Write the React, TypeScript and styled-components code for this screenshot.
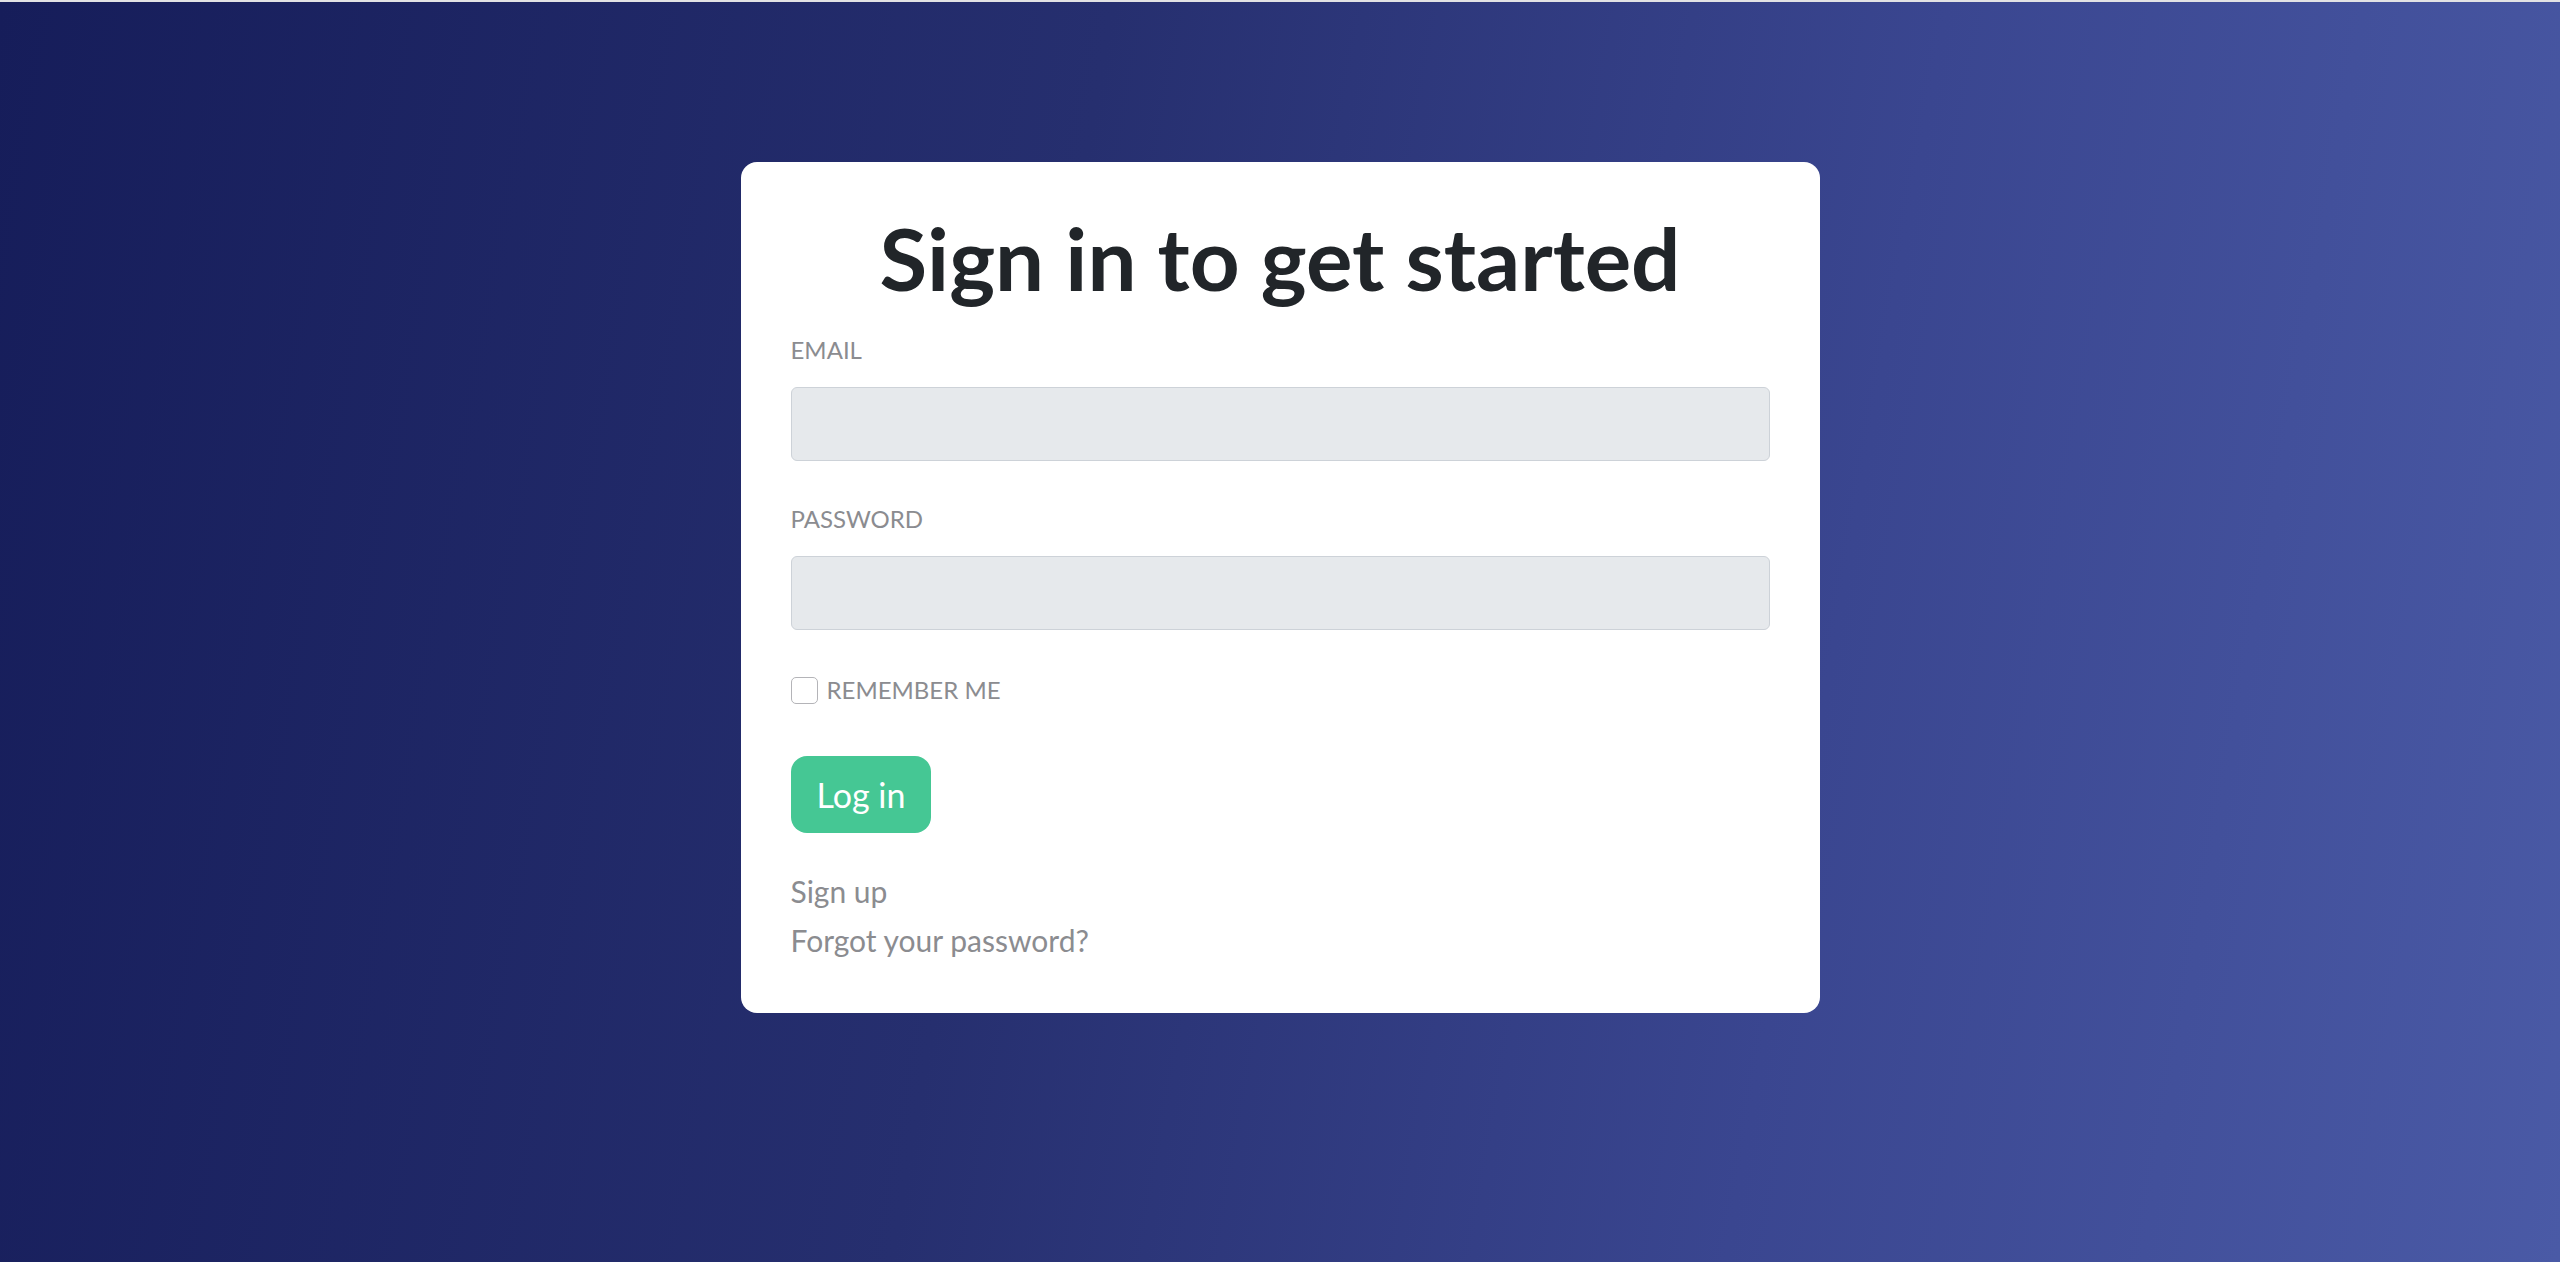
import React from "react";
import styled, { createGlobalStyle } from "styled-components";

const GlobalStyle = createGlobalStyle`
  html, body {
    margin: 0;
    padding: 0;
    height: 100%;
  }
  body {
    font-family: "Lato", "Noto Sans", sans-serif;
  }
  #root {
    min-height: 100%;
  }
`;

export default function App() {
  return (
    <>
      <GlobalStyle />
      <Page>
        <Card>
          <Title>Sign in to get started</Title>

          <Field>
            <Label htmlFor="email">Email</Label>
            <Input id="email" type="email" />
          </Field>

          <Field>
            <Label htmlFor="password">Password</Label>
            <Input id="password" type="password" />
          </Field>

          <Remember>
            <Check type="checkbox" />
            <span>Remember me</span>
          </Remember>

          <Submit type="button">Log in</Submit>

          <Links>
            <LinkText href="#">Sign up</LinkText>
            <LinkText href="#">Forgot your password?</LinkText>
          </Links>
        </Card>
      </Page>
    </>
  );
}

const Page = styled.div`
  box-sizing: border-box;
  min-height: 1262px;
  border-top: 2px solid #e2e2e4;
  background: linear-gradient(100deg, #161d5a 0%, #262f6f 40%, #3a4690 70%, #4a5aa6 100%);
  display: flex;
  justify-content: center;
  align-items: flex-start;
  padding-top: 160px;
`;

const Card = styled.div`
  box-sizing: border-box;
  width: 1079px;
  background: #fff;
  border-radius: 16px;
  padding: 46px 50px 50px;
  display: flex;
  flex-direction: column;
`;

const Title = styled.h1`
  margin: 0 0 28px;
  text-align: center;
  font-size: 87px;
  line-height: 100px;
  font-weight: 700;
  color: #212529;
`;

const Field = styled.div`
  display: flex;
  flex-direction: column;
  margin-bottom: 44px;
`;

const Label = styled.label`
  font-size: 24px;
  line-height: 28px;
  color: #8b8c90;
  text-transform: uppercase;
  margin-bottom: 23px;
`;

const Input = styled.input`
  box-sizing: border-box;
  height: 74px;
  width: 100%;
  background: #e6e9ec;
  border: 1.5px solid #cdd2d8;
  border-radius: 6px;
  font-size: 26px;
  padding: 0 20px;
  outline: none;
`;

const Remember = styled.label`
  display: flex;
  align-items: center;
  gap: 9px;
  font-size: 24px;
  line-height: 28px;
  color: #8b8c90;
  text-transform: uppercase;
  margin-top: 2px;
  margin-bottom: 52px;
`;

const Check = styled.input`
  appearance: none;
  margin: 0;
  width: 27px;
  height: 27px;
  border: 1.5px solid #b4b4b8;
  border-radius: 5px;
  background: #fff;
`;

const Submit = styled.button`
  align-self: flex-start;
  height: 77px;
  padding: 0 26px;
  border: none;
  border-radius: 16px;
  background: #45c794;
  color: #fff;
  font-family: "Lato", "Noto Sans", sans-serif;
  font-size: 34px;
  cursor: pointer;
`;

const Links = styled.div`
  display: flex;
  flex-direction: column;
  margin-top: 35px;
  gap: 3px;
`;

const LinkText = styled.a`
  font-size: 30px;
  line-height: 46px;
  color: #8b8c90;
  text-decoration: none;
`;
